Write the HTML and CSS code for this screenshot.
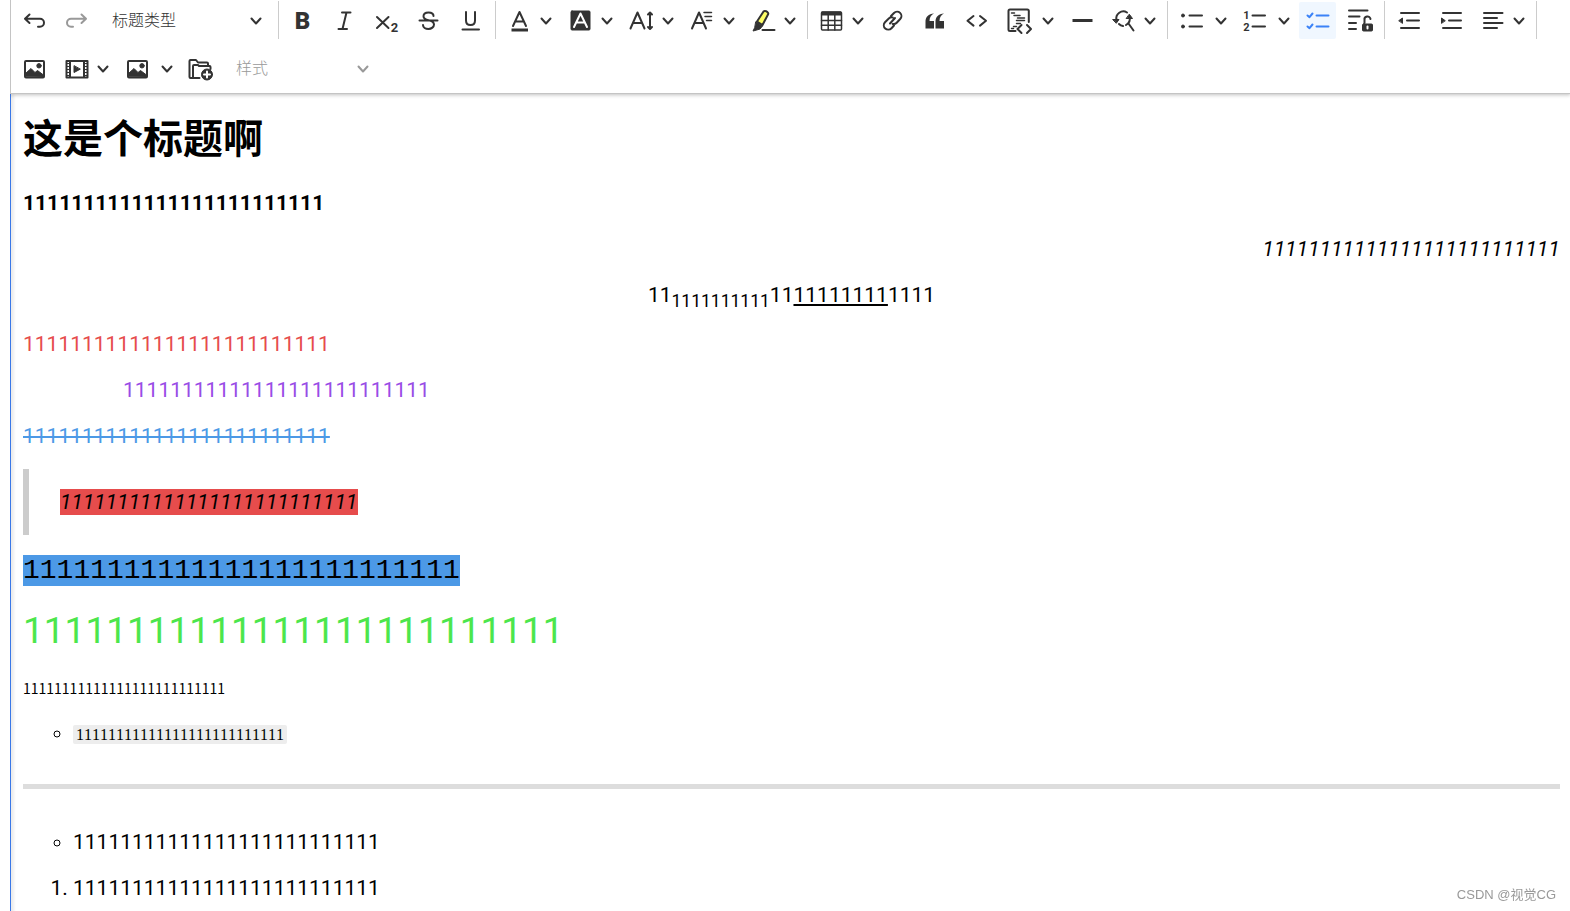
FILE: index.html
```html
<!DOCTYPE html>
<html lang="zh-CN">
<head>
<meta charset="utf-8">
<title>富文本编辑器</title>
<link rel="stylesheet" href="styles.css">
</head>
<body>
<svg class="sprite" aria-hidden="true">
  <symbol id="chevron" viewBox="0 0 12 12"><path d="M1.500 3.500L6 8.500l4.500-5"/></symbol>
  <symbol id="image" viewBox="0 0 24 24"><rect x="2.500" y="4" width="19" height="16.500" rx="1"/><path class="solid" d="M3 19.500v-3l5.500-5 4 4 2.500-2 6 4.500v2z"/><circle class="solid" cx="16.500" cy="8.800" r="2.200"/></symbol>
</svg>
<main class="editor">
  <div class="toolbar" role="toolbar" aria-label="编辑器工具栏">
    <button class="tool" type="button" aria-label="撤销"><svg class="icon" viewBox="0 0 24 24"><path d="M7 5.500L2.500 9.700 7 14M3 9.700h14.500a4 4 0 0 1 0 8H15.500"/></svg></button>
    <button class="tool dim" type="button" aria-label="重做"><svg class="icon" viewBox="0 0 24 24"><path d="M17 5.500l4.500 4.200L17 14M21 9.700H6.500a4 4 0 0 0 0 8h2"/></svg></button>
    <label class="picker heading"><select class="choice" aria-label="标题类型"><option>标题类型</option></select><svg class="arrow"><use href="#chevron"/></svg></label>
    <span class="divider"></span>
    <button class="tool" type="button" aria-label="加粗"><svg class="icon" viewBox="0 0 24 24"><text class="letter heavy" x="12" y="20">B</text></svg></button>
    <button class="tool" type="button" aria-label="倾斜"><svg class="icon" viewBox="0 0 24 24"><path d="M9.500 3.500h8.500M6 20h8.500M14 3.500L10 20"/></svg></button>
    <button class="tool" type="button" aria-label="下标"><svg class="icon" viewBox="0 0 24 24"><path d="M2.500 8l11.500 11M14 8L2.500 19"/><text class="letter index" x="20" y="23">2</text></svg></button>
    <button class="tool" type="button" aria-label="删除线"><svg class="icon" viewBox="0 0 24 24"><path d="M17 7c0-2-2-3.500-5-3.500S7 5 7 7.200s2 3.300 5 4c3.500.8 5.500 2 5.500 4.300S15 20 12 20s-5.500-1.500-5.500-4M3 11.500h18"/></svg></button>
    <button class="tool" type="button" aria-label="下划线"><svg class="icon" viewBox="0 0 24 24"><path d="M7.500 3v8.500c0 3 2 4.500 4.500 4.500s4.500-1.500 4.500-4.500V3M4 20.500h16.500"/></svg></button>
    <span class="divider"></span>
    <button class="tool drop" type="button" aria-label="字体颜色"><svg class="icon" viewBox="0 0 24 24"><path d="M5.500 17L12 3l6.500 14M7.800 12.500h8.400"/><path class="thick" d="M4 21h16.500"/></svg><svg class="arrow"><use href="#chevron"/></svg></button>
    <button class="tool drop" type="button" aria-label="字体背景色"><svg class="icon" viewBox="0 0 24 24"><rect class="solid" x="2.500" y="2" width="19" height="19" rx="1"/><path class="inverse" d="M5.500 18L12 4.500 18.500 18M7.800 13.500h8.400"/></svg><svg class="arrow"><use href="#chevron"/></svg></button>
    <button class="tool drop" type="button" aria-label="字号"><svg class="icon" viewBox="0 0 24 24"><path d="M1 19.500L8 3.500l7 16M3.500 14h9M20.500 4v15.500M18.500 5.500l2-2 2 2M18.500 18l2 2 2-2"/></svg><svg class="arrow"><use href="#chevron"/></svg></button>
    <button class="tool drop" type="button" aria-label="字体"><svg class="icon" viewBox="0 0 24 24"><path d="M1.500 19.500L8.500 3.500l7 16M4 14h9"/><path class="fine" d="M13.500 3.500H21M14.500 7.500H21M16 11.500h5"/></svg><svg class="arrow"><use href="#chevron"/></svg></button>
    <button class="tool drop" type="button" aria-label="高亮"><svg class="icon" viewBox="0 0 24 24"><path class="marker" d="M5.500 12.500L12 2.500q1-1 2.500-.3l1.500 1q1.200 1 .5 2.300L11 16z"/><path class="solid" d="M4.500 13l6.500 4-2.500 3-5 1.500L1.500 22l1.500-3z"/><path d="M11 21h12"/></svg><svg class="arrow"><use href="#chevron"/></svg></button>
    <span class="divider"></span>
    <button class="tool drop" type="button" aria-label="表格"><svg class="icon" viewBox="0 0 24 24"><rect class="fine" x="2" y="3" width="20" height="18" rx="1"/><path class="solid" d="M2.500 3h19v3h-19z"/><path class="fine" d="M2 11.500h20M2 16.300h20M8.700 6v15M15.300 6v15"/></svg><svg class="arrow"><use href="#chevron"/></svg></button>
    <button class="tool" type="button" aria-label="链接"><svg class="icon" viewBox="0 0 24 24"><path d="M10.500 7l3-3a4.300 4.300 0 0 1 6.200 6l-3.500 3.700a4.300 4.300 0 0 1-4 1.200M13.500 16.500l-2.500 2.700a4.300 4.300 0 0 1-6.500-6L8.300 9.500a4.300 4.300 0 0 1 4-1M9.500 14.500l5-5.500"/></svg></button>
    <button class="tool" type="button" aria-label="引用"><svg class="icon" viewBox="0 0 24 24"><path class="quote" d="M3 19.500v-7C3 8 6 4.800 11.500 4.500 8.500 6 7 8.500 7 12h4.500v7.500zM13 19.500v-7c0-4.500 3-7.700 8.500-8-3 1.500-4.500 4-4.500 7.500h4.500v7.500z"/></svg></button>
    <button class="tool" type="button" aria-label="代码"><svg class="icon" viewBox="0 0 24 24"><path d="M9 7L3 11.800 9 16.600M15.500 7l6 4.800-6 4.800"/></svg></button>
    <button class="tool split" type="button" aria-label="代码块"><svg class="icon" viewBox="0 0 24 24"><path d="M9 22H3.500q-1.500 0-1.500-1.500V2q0-1.500 1.500-1.500h17.300q1.500 0 1.500 1.500v11"/><path class="fine" d="M5 4h3M7.500 6.500h6M11 9h7M10 11.500h8M10 14.500h4M7 17.500h3M5 19.500h2"/><path d="M15 16l-4 4 4 4M20.500 16l4 4-4 4"/></svg><svg class="arrow"><use href="#chevron"/></svg></button>
    <button class="tool" type="button" aria-label="分割线"><svg class="icon" viewBox="0 0 24 24"><path class="thick" d="M3 11.500h20"/></svg></button>
    <button class="tool drop" type="button" aria-label="查找替换"><svg class="icon" viewBox="0 0 24 24"><path d="M5 11a7 7 0 0 1 10.500-7.500M18 7.500a7.500 7.500 0 0 1-3.500 8.500M11.500 17a7 7 0 0 1-4-2M17 14.500l5 7"/><path class="solid" d="M1.500 10.500h6L5 14zM15 9.500h6L18 5.500z"/></svg><svg class="arrow"><use href="#chevron"/></svg></button>
    <span class="divider"></span>
    <button class="tool split" type="button" aria-label="无序列表"><svg class="icon" viewBox="0 0 24 24"><circle class="solid" cx="3.500" cy="6.500" r="1.500"/><circle class="solid" cx="3.500" cy="17.500" r="1.500"/><path d="M10 6.500h12.500M10 17.500h12.500"/></svg><svg class="arrow"><use href="#chevron"/></svg></button>
    <button class="tool split" type="button" aria-label="有序列表"><svg class="icon" viewBox="0 0 24 24"><text class="letter tiny" x="4" y="9.500">1</text><text class="letter tiny" x="4" y="21.500">2</text><path d="M10 6.500h12.500M10 17.500h12.500"/></svg><svg class="arrow"><use href="#chevron"/></svg></button>
    <button class="tool active" type="button" aria-pressed="true" aria-label="待办列表"><svg class="icon" viewBox="0 0 24 24"><path d="M2 6.500L4 8.200 7 4.500M2 17.500l2 1.700 3-3.700M11 6.500h12M11 17.500h12"/></svg></button>
    <button class="tool" type="button" aria-label="限制编辑"><svg class="icon" viewBox="0 0 24 24"><path d="M1.500 1.500H20M1.500 7.500H12M1.500 14H8.500M1.500 20H8.500M17 14v-3a3 3 0 0 1 6-1"/><rect class="solid" x="15" y="15" width="10" height="7" rx="1"/><path class="inverse" d="M20 17.500v2"/></svg></button>
    <span class="divider"></span>
    <button class="tool" type="button" aria-label="减少缩进"><svg class="icon" viewBox="0 0 24 24"><path d="M4.500 4H22.500M10.500 11.500h12M4.500 19h18"/><path class="solid" d="M2.500 11.500L6 9v5z"/></svg></button>
    <button class="tool" type="button" aria-label="增加缩进"><svg class="icon" viewBox="0 0 24 24"><path d="M4.500 4H22.500M10.500 11.500h12M4.500 19h18"/><path class="solid" d="M6.500 11.500L3 9v5z"/></svg></button>
    <button class="tool drop" type="button" aria-label="对齐"><svg class="icon" viewBox="0 0 24 24"><path d="M3.500 4H22M3.500 9h13M3.500 14H22M3.500 19h13"/></svg><svg class="arrow"><use href="#chevron"/></svg></button>
    <span class="divider"></span>
    <button class="tool" type="button" aria-label="插入图片"><svg class="icon"><use href="#image"/></svg></button>
    <button class="tool drop" type="button" aria-label="插入视频"><svg class="icon" viewBox="0 0 24 24"><path d="M2 4h21v16.500H2zM5.500 4v16.500M19.500 4v16.500"/><path class="film" d="M3.500 6v14M21.500 6v14"/><path class="solid" d="M9.500 9v6.500l6-3.200z"/></svg><svg class="arrow"><use href="#chevron"/></svg></button>
    <button class="tool split" type="button" aria-label="图片选项"><svg class="icon"><use href="#image"/></svg><svg class="arrow"><use href="#chevron"/></svg></button>
    <button class="tool" type="button" aria-label="文件管理"><svg class="icon" viewBox="0 0 24 24"><path d="M11 21H2q-1 0-1-1V4q0-1 1-1h5.500l2 2.500h9q1 0 1 1V8M4.500 20V9q0-1 1-1h4l1 1h10.500q1 0 1 1v2"/><circle class="solid" cx="18.500" cy="17.500" r="5.500"/><path class="inverse" d="M15.500 17.500h6M18.500 14.500v6"/></svg></button>
    <label class="picker style dim"><select class="choice" aria-label="样式"><option>样式</option></select><svg class="arrow"><use href="#chevron"/></svg></label>
  </div>
  <article class="content">
    <h1>这是个标题啊</h1>
    <p class="strong">1111111111111111111111111</p>
    <p class="right"><i>11111111111111111111111111</i></p>
    <p class="center">11<sub>1111111111</sub>11<u>11111111</u>1111</p>
    <p class="red">11111111111111111111111111</p>
    <p class="purple indented">11111111111111111111111111</p>
    <p class="blue"><s>11111111111111111111111111</s></p>
    <blockquote><p><i class="mark-red">11111111111111111111111111</i></p></blockquote>
    <p class="typewriter"><span class="mark-blue">11111111111111111111111111</span></p>
    <p class="huge">11111111111111111111111111</p>
    <p class="small">11111111111111111111111111</p>
    <ul><li><code>11111111111111111111111111</code></li></ul>
    <hr>
    <ul><li>11111111111111111111111111</li></ul>
    <ol><li>11111111111111111111111111</li></ol>
  </article>
</main>
<div class="watermark">CSDN @视觉CG</div>
</body>
</html>
```
FILE: styles.css
```css
* {
  box-sizing: border-box;
}

body {
  margin: 0;
  background: #fff;
  color: #000;
  font-family: Roboto, "Noto Sans CJK SC", sans-serif;
}

.sprite {
  position: absolute;
  width: 0;
  height: 0;
}

.editor {
  display: flex;
  flex-direction: column;
  height: 100vh;
  margin-left: 10px;
  overflow: hidden;
}

/* Toolbar */
.toolbar {
  position: relative;
  display: flex;
  flex-wrap: wrap;
  align-items: flex-end;
  gap: 11px 5px;
  padding: 1px 5px 6px 5px;
  border-left: 1px solid #c4c4c4;
  border-bottom: 1px solid #c4c4c4;
  box-shadow: 0 2px 3px rgba(0, 0, 0, 0.15);
  color: #333;
}

.tool {
  display: flex;
  align-items: center;
  height: 37px;
  padding: 0 6px;
  border: 0;
  border-radius: 2px;
  background: none;
  color: inherit;
}

.tool.drop {
  gap: 8px;
  padding-right: 5px;
}

.tool.split {
  gap: 11px;
  padding-right: 4px;
}

.tool.active {
  background: #f0f7ff;
  color: #3b82f7;
}

.dim,
.tool.dim {
  color: #999;
}

.icon,
.arrow {
  flex: none;
  fill: none;
  stroke: currentColor;
  stroke-width: 2;
  stroke-linecap: round;
  stroke-linejoin: round;
  overflow: visible;
}

.icon {
  width: 25px;
  height: 24px;
}

.arrow {
  width: 12px;
  height: 12px;
}

.solid,
.quote {
  fill: currentColor;
  stroke-width: 1;
}

.quote {
  stroke: none;
}

.fine {
  stroke-width: 1.5;
}

.thick {
  stroke-width: 3;
  stroke-linecap: butt;
}

.marker {
  fill: #fdfd66;
}

.inverse {
  stroke: #fff;
}

.film {
  stroke-dasharray: 1 2;
  stroke-linecap: butt;
}

.letter {
  fill: currentColor;
  stroke: none;
  font: 700 11px Roboto, sans-serif;
  text-anchor: middle;
}

.letter.heavy {
  font-size: 24px;
  font-weight: 900;
}

.letter.index {
  font-size: 13px;
}

.divider {
  width: 1px;
  height: 38px;
  margin-left: 1px;
  background: #ccc;
}

.picker {
  display: flex;
  align-items: center;
  height: 37px;
  padding: 0 10px 0 12px;
}

.picker.heading {
  width: 172px;
}

.picker.style {
  width: 155px;
}

.choice {
  flex: 1;
  min-width: 0;
  padding: 0 0 4px;
  border: 0;
  background: none;
  appearance: none;
  color: inherit;
  font: 300 16px "Noto Sans CJK SC", sans-serif;
}

/* Document */
.content {
  flex: 1;
  padding: 16px 10px 0 12px;
  border-left: 1px solid #3a78e7;
  box-shadow: inset 3px 0 3px rgba(0, 0, 0, 0.08);
  font-size: 21px;
  line-height: 26px;
  font-kerning: none;
}

h1 {
  margin: 0 0 28px;
  font: 700 40px/52px "Noto Sans CJK SC", sans-serif;
}

p,
ul,
ol,
blockquote {
  margin: 0 0 20px;
}

sub {
  line-height: 20px;
}

.strong {
  font-weight: 700;
}

.right {
  text-align: right;
}

.center {
  text-align: center;
}

.red {
  color: #e64c4c;
}

.purple {
  color: #994ce6;
}

.blue {
  color: #4c99e6;
}

.indented {
  margin-left: 100px;
}

blockquote {
  padding: 20px 0 20px 31px;
  border-left: 6px solid #ccc;
}

blockquote p {
  margin: 0;
}

.mark-red {
  padding: 1px 0;
  background: #e64c4c;
}

.typewriter {
  font-family: "Liberation Mono", monospace;
  font-size: 28px;
  line-height: 31px;
}

.mark-blue {
  background: #4c99e6;
}

.huge {
  color: #4ce64c;
  font-size: 37px;
  line-height: 50px;
}

.small {
  font: 14px/24px "Noto Sans CJK SC", sans-serif;
}

ul,
ol {
  padding-left: 50px;
}

ul {
  list-style: circle;
}

code {
  padding: 1px 3px;
  border-radius: 2px;
  background: #ededed;
  font: 16px "Liberation Serif", serif;
  font-kerning: none;
}

hr {
  height: 5px;
  margin: 38px 0 40px;
  border: 0;
  background: #ddd;
}

.watermark {
  position: fixed;
  right: 14px;
  bottom: 6px;
  color: #999;
  font: 13px/20px "Liberation Sans", "Noto Sans CJK SC", sans-serif;
}
```
